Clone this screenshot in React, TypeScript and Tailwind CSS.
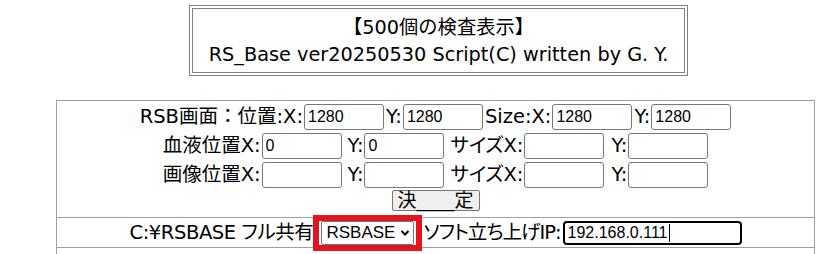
import React from "react";

const inputCls =
  "w-[80px] h-[26px] border border-[#767676] rounded-[3px] px-[3px] text-[16px] text-black bg-white outline-none shrink-0 [font-feature-settings:normal]";
const inputFont = { fontFamily: '"Liberation Sans", Arial, sans-serif' };

function Inp({ v }: { v?: string }) {
  return <input className={inputCls} style={inputFont} defaultValue={v ?? ""} readOnly />;
}

export default function App() {
  return (
    <div
      className="w-[838px] h-[254px] overflow-hidden bg-white text-black [font-feature-settings:'palt']"
      style={{ fontFamily: '"DejaVu Sans", "Noto Sans CJK JP", sans-serif' }}
    >
      <div className="pt-[5px] pl-[189px]">
        <div className="w-[499px] h-[71px] border border-[#808080] p-[2px]">
          <div className="h-full border border-[#808080] flex flex-col items-center justify-center text-[19.3px] leading-[27px] [font-feature-settings:normal]">
            <div>【500個の検査表示】</div>
            <div>RS_Base ver20250530 Script(C) written by G. Y.</div>
          </div>
        </div>
      </div>

      <div className="mt-[24px] ml-[56px] w-[759px] border border-[#a0a0a0] text-[19.5px] leading-none">
        <div className="pt-[1px] pb-[6px] border-b border-[#a0a0a0] flex flex-col items-center">
          <div className="h-[29px] flex items-center">
            <span className="mr-[1px]">
              RSB画面<span className="[font-feature-settings:normal]">：</span>位置:X:
            </span>
            <Inp v="1280" />
            <span className="ml-[2px] mr-[1px]">Y:</span>
            <Inp v="1280" />
            <span className="ml-[2px] mr-[1px]">Size:X:</span>
            <Inp v="1280" />
            <span className="ml-[2px] mr-[1px]">Y:</span>
            <Inp v="1280" />
          </div>
          <div className="h-[29px] flex items-center">
            <span className="mr-[1px]">血液位置X:</span>
            <Inp v="0" />
            <span className="ml-[6px] mr-[1px]">Y:</span>
            <Inp v="0" />
            <span className="ml-[6px] mr-[1px]">サイズX:</span>
            <Inp />
            <span className="ml-[7px] mr-[1px]">Y:</span>
            <Inp />
          </div>
          <div className="h-[29px] flex items-center">
            <span className="mr-[1px]">画像位置X:</span>
            <Inp />
            <span className="ml-[6px] mr-[1px]">Y:</span>
            <Inp />
            <span className="ml-[6px] mr-[1px]">サイズX:</span>
            <Inp />
            <span className="ml-[7px] mr-[1px]">Y:</span>
            <Inp />
          </div>
          <button className="mt-[1px] h-[21px] w-[88px] bg-[#efefef] border border-[#767676] rounded-[2px] text-[19px] leading-none flex items-center justify-center">
            決____定
          </button>
        </div>

        <div className="h-[30px] border-b border-[#a0a0a0] flex items-center justify-center">
          <span className="mr-[8px] tracking-[-0.4px]">C:¥RSBASE フル共有</span>
          <span className="relative inline-flex">
            <span
              className="h-[24px] w-[93px] border border-[#767676] rounded-[2px] bg-white flex items-center pl-[4px] text-[17px]"
              style={inputFont}
            >
              RSBASE
              <svg className="ml-[5px]" width="10" height="8" viewBox="0 0 10 8">
                <path d="M1.5 2 L5 5.5 L8.5 2" fill="none" stroke="#000" strokeWidth="2" />
              </svg>
            </span>
            <span className="absolute -left-[8px] -right-[8px] -top-[6px] -bottom-[6px] border-[6px] border-[#e3141d] pointer-events-none" />
          </span>
          <span className="ml-[9px] mr-[2px] tracking-[-1px]">ソフト立ち上げIP:</span>
          <span
            className="h-[24px] w-[179px] border-2 border-black rounded-[4px] flex items-center pl-[3px] text-[16px]"
            style={inputFont}
          >
            192.168.0.111
            <span className="ml-[1px] w-px h-[18px] bg-black" />
          </span>
        </div>

        <div className="h-[30px] flex items-center justify-center pt-[22px]">
          <span>保存先フォルダ：C:¥RSBASE¥DATA　ファイル名：</span>
        </div>
      </div>
    </div>
  );
}
